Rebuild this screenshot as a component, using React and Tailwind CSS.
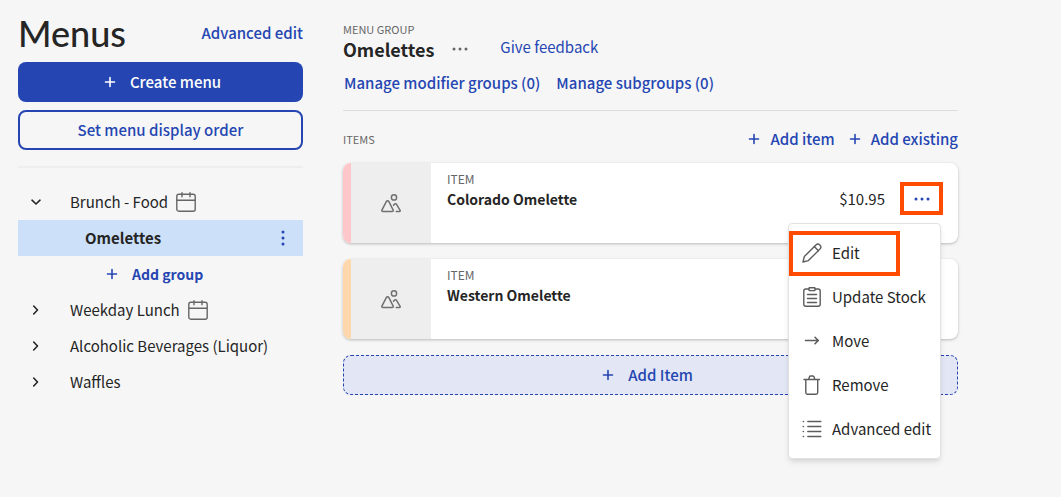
import React from "react";

function Svg({ size = "size-5", box = "0 0 20 20", width = 1.3, children }) {
  return (
    <svg
      className={`${size} shrink-0`}
      viewBox={box}
      fill="none"
      stroke="currentColor"
      strokeWidth={width}
      strokeLinecap="round"
      strokeLinejoin="round"
      aria-hidden="true"
    >
      {children}
    </svg>
  );
}

const Plus = () => (
  <Svg size="size-3" box="0 0 12 12" width={1.6}>
    <path d="M6 1.5v9M1.5 6h9" />
  </Svg>
);

const Chevron = ({ open }) => (
  <Svg size="size-3" box="0 0 12 12" width={1.6}>
    <path d={open ? "M2 4.2 6 8l4-3.8" : "M3.7 2 7.500 6l-3.800 4"} />
  </Svg>
);

const Dots = ({ vertical }) => (
  <svg
    className={vertical ? "h-4 w-1 shrink-0" : "h-1 w-4 shrink-0"}
    viewBox={vertical ? "0 0 4 16" : "0 0 16 4"}
    fill="currentColor"
    aria-hidden="true"
  >
    {[2, 8, 14].map((p) => (
      <circle key={p} cx={vertical ? 2 : p} cy={vertical ? p : 2} r="1.5" />
    ))}
  </svg>
);

const Calendar = () => (
  <span className="text-[#666666]">
    <Svg width={1.4}>
      <rect x="0.8" y="2.2" width="18.4" height="17" rx="2" />
      <path d="M1 8.2h18M6 0.7v4M14 0.7v4" />
    </Svg>
  </span>
);

const Picture = () => (
  <Svg width={1.5}>
    <circle cx="13" cy="4.4" r="2.6" />
    <path d="M1.6 18.4c-.8 0-1-.6-.7-1.3L5.300 8.600c.6-1.100 2-1.100 2.600 0l4.300 8.500c.3.700 0 1.300-.7 1.300z" />
    <path d="M12.600 12.300l.8-1.100c.5-.7 1.500-.7 2 0l3.600 6c.4.700.1 1.200-.6 1.200h-3.200" />
  </Svg>
);

const Pencil = () => (
  <Svg width={1.4}>
    <path d="M1 19l1.300-5.400L13.900 2c1.300-1.300 2.700-1.300 3.900-.1 1.400 1.300 1.400 2.800.2 4.100L6.400 17.600z" />
    <path d="M12.300 3.600l4.100 4.100" />
  </Svg>
);

const Clipboard = () => (
  <Svg width={1.4}>
    <path d="M6.800 2H3.800C2.500 2 1.800 2.800 1.800 4v13.200c0 1.200.8 2 2 2h12.400c1.200 0 2-.8 2-2V4c0-1.200-.7-2-2-2h-3" />
    <rect x="7" y="0.800" width="6" height="2.800" rx="0.500" />
    <path d="M5.500 7.500h9M5.500 11.500h9M5.500 15.500h9" />
  </Svg>
);

const Arrow = () => (
  <Svg width={1.6}>
    <path d="M3.500 9.500h12.700M13 6.300l3.300 3.200L13 12.700" />
  </Svg>
);

const Trash = () => (
  <Svg width={1.4}>
    <path d="M2 4.500h15.500M3.800 4.500v13c0 1.100.6 1.700 1.600 1.700h8.700c1 0 1.600-.6 1.600-1.700v-13M6.700 4.300l.7-2.300c.2-.7.600-1 1.200-1h2.300c.6 0 1 .3 1.200 1l.7 2.300" />
  </Svg>
);

const List = () => (
  <Svg width={1.4}>
    <path d="M5.800 2.500h13M5.800 7.500h13M5.800 12.500h13M5.800 17.500h13M1.200 2.500h.3M1.200 7.500h.3M1.200 12.500h.3M1.200 17.500h.3" />
  </Svg>
);

function MenuRow({ name, open, calendar }) {
  return (
    <button
      type="button"
      aria-expanded={Boolean(open)}
      className="flex h-9 w-full items-center pl-3"
    >
      <Chevron open={open} />
      <span className="mr-2 ml-7">{name}</span>
      {calendar && <Calendar />}
    </button>
  );
}

const actions = [
  { label: "Edit", Icon: Pencil, marked: true },
  { label: "Update Stock", Icon: Clipboard },
  { label: "Move", Icon: Arrow },
  { label: "Remove", Icon: Trash },
  { label: "Advanced edit", Icon: List },
];

function ActionMenu() {
  return (
    <ul className="absolute top-[41px] right-0.5 z-10 w-[153px] rounded border border-[#e2e2e2] bg-white py-[7px] shadow-md">
      {actions.map(({ label, Icon, marked }) => (
        <li key={label} className="relative">
          <button
            type="button"
            className="flex h-11 w-full items-center gap-2.5 pl-[13px] whitespace-nowrap"
          >
            <span className="text-[#5c5c5c]">
              <Icon />
            </span>
            {label}
          </button>
          {marked && (
            <span className="pointer-events-none absolute top-0 left-0 h-[45px] w-[111px] border-4 border-[#ff4c00]" />
          )}
        </li>
      ))}
    </ul>
  );
}

function ItemCard({ name, price, stripe, menuOpen }) {
  return (
    <article className="flex h-20 rounded-lg bg-white shadow-[0_1px_3px_rgba(0,0,0,0.25)]">
      <div className={`w-2 shrink-0 rounded-l-lg ${stripe}`} />
      <div className="flex w-20 shrink-0 items-center justify-center bg-[#eeeeee] text-[#707070]">
        <Picture />
      </div>
      <div className="flex-1 pt-2 pl-4">
        <p className="text-[12px] leading-4 text-[#666666]">ITEM</p>
        <h3 className="mt-0.5 text-[14px] leading-5 font-bold">{name}</h3>
      </div>
      {menuOpen && (
        <div className="relative mt-[19px] mr-[15px] flex h-[33px] items-center gap-[15px]">
          <span>{price}</span>
          <button
            type="button"
            aria-label="Item actions"
            aria-expanded="true"
            className="flex h-full w-[43px] items-center justify-center border-4 border-[#ff4c00] text-[#2546b2]"
          >
            <Dots />
          </button>
          <ActionMenu />
        </div>
      )}
    </article>
  );
}

export default function App() {
  return (
    <div className="flex min-h-screen gap-10 bg-[#f6f6f6] pr-[103px] pl-[18px] font-['Noto_Sans_CJK_SC','Noto_Sans',sans-serif] text-[15px] leading-5 text-[#252525]">
      <aside className="w-[285px] shrink-0">
        <header className="flex h-[62px] items-center justify-between pt-1">
          <h1 className="font-['Lato',sans-serif] text-[36px] leading-10 font-medium">Menus</h1>
          <a href="#advanced" className="font-medium text-[#2546b2]">
            Advanced edit
          </a>
        </header>
        <div className="flex flex-col gap-2 border-b-2 border-[#eeeeee] pb-4">
          <button
            type="button"
            className="flex h-10 items-center justify-center gap-3.5 rounded-lg bg-[#2546b2] pl-1 font-medium text-white"
          >
            <Plus />
            Create menu
          </button>
          <button
            type="button"
            className="h-10 rounded-lg border-2 border-[#2546b2] font-medium text-[#2546b2]"
          >
            Set menu display order
          </button>
        </div>
        <nav className="pt-4">
          <MenuRow name="Brunch - Food" open calendar />
          <div className="flex h-9 items-center justify-between bg-[#cde0f9] pr-[18px] pl-[67px]">
            <a href="#omelettes" className="font-bold">
              Omelettes
            </a>
            <button type="button" aria-label="Group actions" className="text-[#2546b2]">
              <Dots vertical />
            </button>
          </div>
          <button
            type="button"
            className="ml-[88px] flex h-9 items-center gap-3.5 text-[14px] font-bold text-[#2546b2]"
          >
            <Plus />
            Add group
          </button>
          <MenuRow name="Weekday Lunch" calendar />
          <MenuRow name="Alcoholic Beverages (Liquor)" />
          <MenuRow name="Waffles" />
        </nav>
      </aside>

      <main className="min-w-0 flex-1 pt-[21px]">
        <header className="border-b border-[#dedede] pb-[17px]">
          <p className="text-[11px] leading-4 text-[#666666]">MENU GROUP</p>
          <div className="flex h-6 items-center">
            <h2 className="text-[18px] leading-6 font-bold">Omelettes</h2>
            <button type="button" aria-label="Menu group actions" className="ml-[18px] text-[#666666]">
              <Dots />
            </button>
            <a href="#feedback" className="ml-8 pb-1 text-[#2546b2]">
              Give feedback
            </a>
          </div>
          <div className="mt-3 flex gap-4 pl-px font-medium text-[#2546b2]">
            <a href="#modifiers">Manage modifier groups (0)</a>
            <a href="#subgroups">Manage subgroups (0)</a>
          </div>
        </header>

        <section>
          <div className="flex h-[52px] items-center justify-between pt-1">
            <h2 className="text-[11px] leading-4 text-[#666666]">ITEMS</h2>
            <div className="flex gap-3.5 font-medium text-[#2546b2]">
              <button type="button" className="flex items-center gap-2.5">
                <Plus />
                Add item
              </button>
              <button type="button" className="flex items-center gap-2.5">
                <Plus />
                Add existing
              </button>
            </div>
          </div>
          <div className="flex flex-col gap-4">
            <ItemCard name="Colorado Omelette" price="$10.95" stripe="bg-[#ffc7c9]" menuOpen />
            <ItemCard name="Western Omelette" stripe="bg-[#ffd7ad]" />
            <button
              type="button"
              className="flex h-10 items-center justify-center gap-3.5 rounded-lg border border-dashed border-[#2546b2] bg-[#e2e6f5] pr-1.5 font-medium text-[#2546b2]"
            >
              <Plus />
              Add Item
            </button>
          </div>
        </section>
      </main>
    </div>
  );
}
